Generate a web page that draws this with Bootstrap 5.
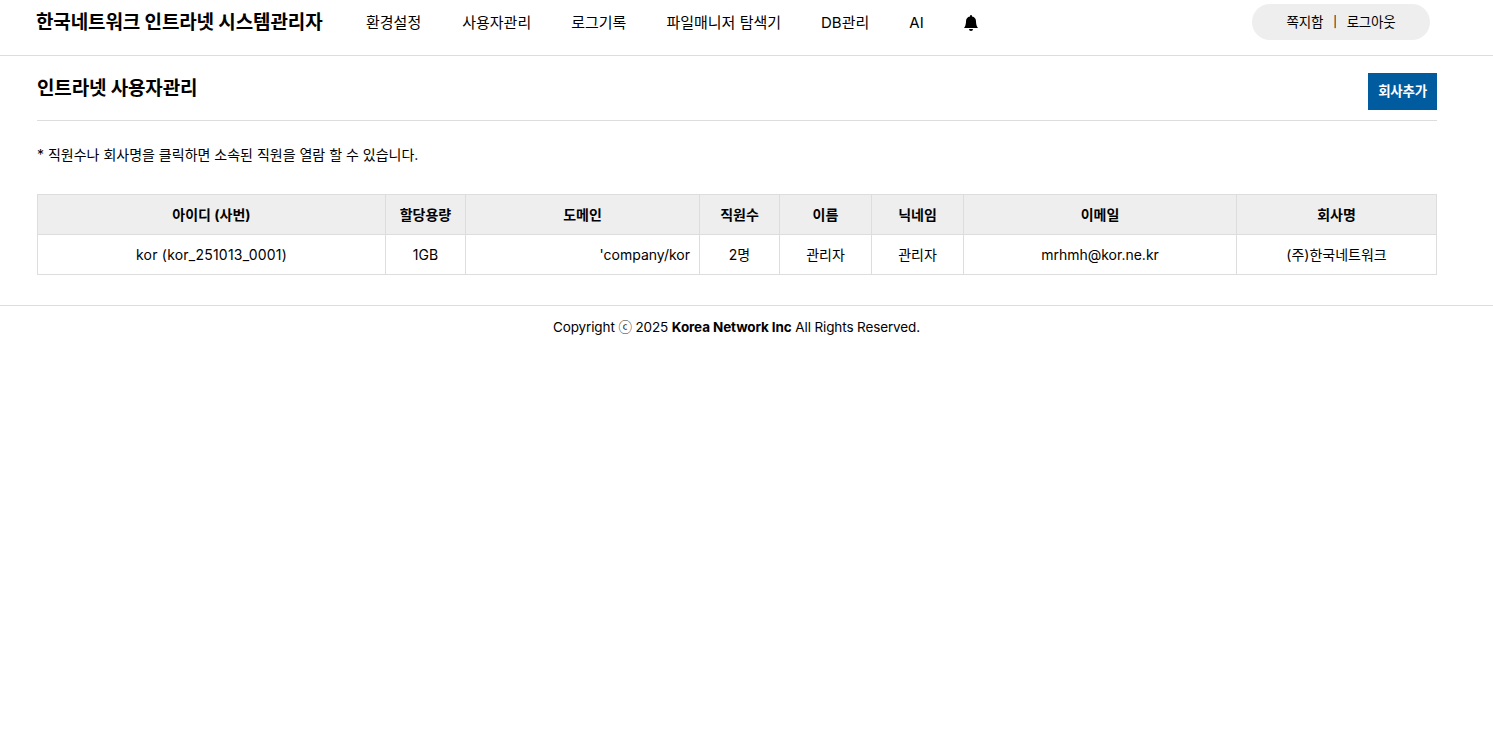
<!DOCTYPE html>
<html lang="ko">
<head>
<meta charset="utf-8">
<title>인트라넷 사용자관리</title>
<link rel="stylesheet" href="https://cdn.jsdelivr.net/npm/bootstrap@5.3.0/dist/css/bootstrap.min.css">
<style>
body{font-family:Inter,"Noto Sans CJK KR",sans-serif;color:#000;font-size:14px;background:#fff}
a{color:#000;text-decoration:none}
.top-bar{height:56px;border-bottom:1px solid #ddd;padding:0 63px 0 36px}
.top-inner{height:44px}
.brand-name{font-size:19px;font-weight:700;letter-spacing:-.12px;width:330px;color:#000;padding-top:2px}
.menu-row{gap:40px;font-size:15px;padding-top:2px}
.menu-row a:first-child{margin-right:1px}
.menu-row a:last-child{margin-left:-1px}
.bell-icon{display:block;width:16px;height:16px}
.user-pill{width:178px;height:36px;background:#eee;border-radius:18px;font-size:13.5px;gap:10px;letter-spacing:-.2px}
.pipe-mark{font-size:11px}
.page-wrap{padding:0 56px 0 37px}
.title-row{height:65px;border-bottom:1px solid #ddd;padding-top:18px}
.page-title{font-size:19px;font-weight:700;letter-spacing:-.15px;line-height:30px;margin:0}
.add-btn{width:69px;height:37px;background:#005b9f;color:#fff;border:0;border-radius:0;font-size:13.5px;font-weight:700;padding:0;letter-spacing:-.25px;margin-top:-1px}
.add-btn:hover{background:#005b9f;color:#fff}
.help-text{margin:24px 0 29px;line-height:20px;font-size:14px}
.user-table{table-layout:fixed;width:1400px;border-collapse:collapse;margin:0}
.user-table th,.user-table td{height:40px;padding:0 10px;border:1px solid #ddd;text-align:center;vertical-align:middle;font-size:14px;color:#000;box-shadow:none}
.user-table thead th{background:#eee;font-weight:700}
.user-table td.dom{text-align:right;padding-right:9px}
.user-table td.uid{letter-spacing:.22px}
.page-foot{margin-top:30px;border-top:1px solid #ddd;padding:10px 20px 0 0;text-align:center;font-size:13.5px;line-height:20px;letter-spacing:-.12px}
.page-foot b{font-weight:700}
.copy-mark{font-family:"Noto Sans CJK KR",sans-serif;color:#333}
</style>
</head>
<body>
<header class="top-bar">
  <div class="top-inner d-flex align-items-center">
    <a class="brand-name" href="#">한국네트워크 인트라넷 시스템관리자</a>
    <nav class="menu-row d-flex align-items-center">
      <a href="#">환경설정</a>
      <a href="#">사용자관리</a>
      <a href="#">로그기록</a>
      <a href="#">파일매니저 탐색기</a>
      <a href="#">DB관리</a>
      <a href="#">AI</a>
      <a href="#" aria-label="알림"><svg class="bell-icon" viewBox="0 0 16 16" fill="#000"><path d="M8 16a2 2 0 0 0 2-2H6a2 2 0 0 0 2 2zM8 0a1 1 0 0 0-1 1v.6A5 5 0 0 0 3 6.5c0 1-.3 3.6-1 5.1-.3.6-.7 1-1 1.4h14c-.3-.4-.7-.8-1-1.4-.7-1.5-1-4.1-1-5.1a5 5 0 0 0-4-4.9V1a1 1 0 0 0-1-1z"/></svg></a>
    </nav>
    <div class="user-pill d-flex align-items-center justify-content-center ms-auto">
      <a href="#">쪽지함</a><span class="pipe-mark">|</span><a href="#">로그아웃</a>
    </div>
  </div>
</header>
<main class="page-wrap">
  <div class="title-row d-flex justify-content-between align-items-start">
    <h1 class="page-title">인트라넷 사용자관리</h1>
    <button type="button" class="btn add-btn">회사추가</button>
  </div>
  <p class="help-text">* 직원수나 회사명을 클릭하면 소속된 직원을 열람 할 수 있습니다.</p>
  <table class="table user-table">
    <colgroup><col style="width:348px"><col style="width:80px"><col style="width:234px"><col style="width:80px"><col style="width:92px"><col style="width:92px"><col style="width:273px"><col style="width:200px"></colgroup>
    <thead>
      <tr><th>아이디 (사번)</th><th>할당용량</th><th>도메인</th><th>직원수</th><th>이름</th><th>닉네임</th><th>이메일</th><th>회사명</th></tr>
    </thead>
    <tbody>
      <tr><td class="uid">kor (kor_251013_0001)</td><td>1GB</td><td class="dom">'company/kor</td><td>2명</td><td>관리자</td><td>관리자</td><td>mrhmh@kor.ne.kr</td><td>(주)한국네트워크</td></tr>
    </tbody>
  </table>
</main>
<footer class="page-foot">Copyright <span class="copy-mark">ⓒ</span> 2025 <b>Korea Network Inc</b> All Rights Reserved.</footer>
<script src="https://cdn.jsdelivr.net/npm/bootstrap@5.3.0/dist/js/bootstrap.bundle.min.js"></script>
</body>
</html>
